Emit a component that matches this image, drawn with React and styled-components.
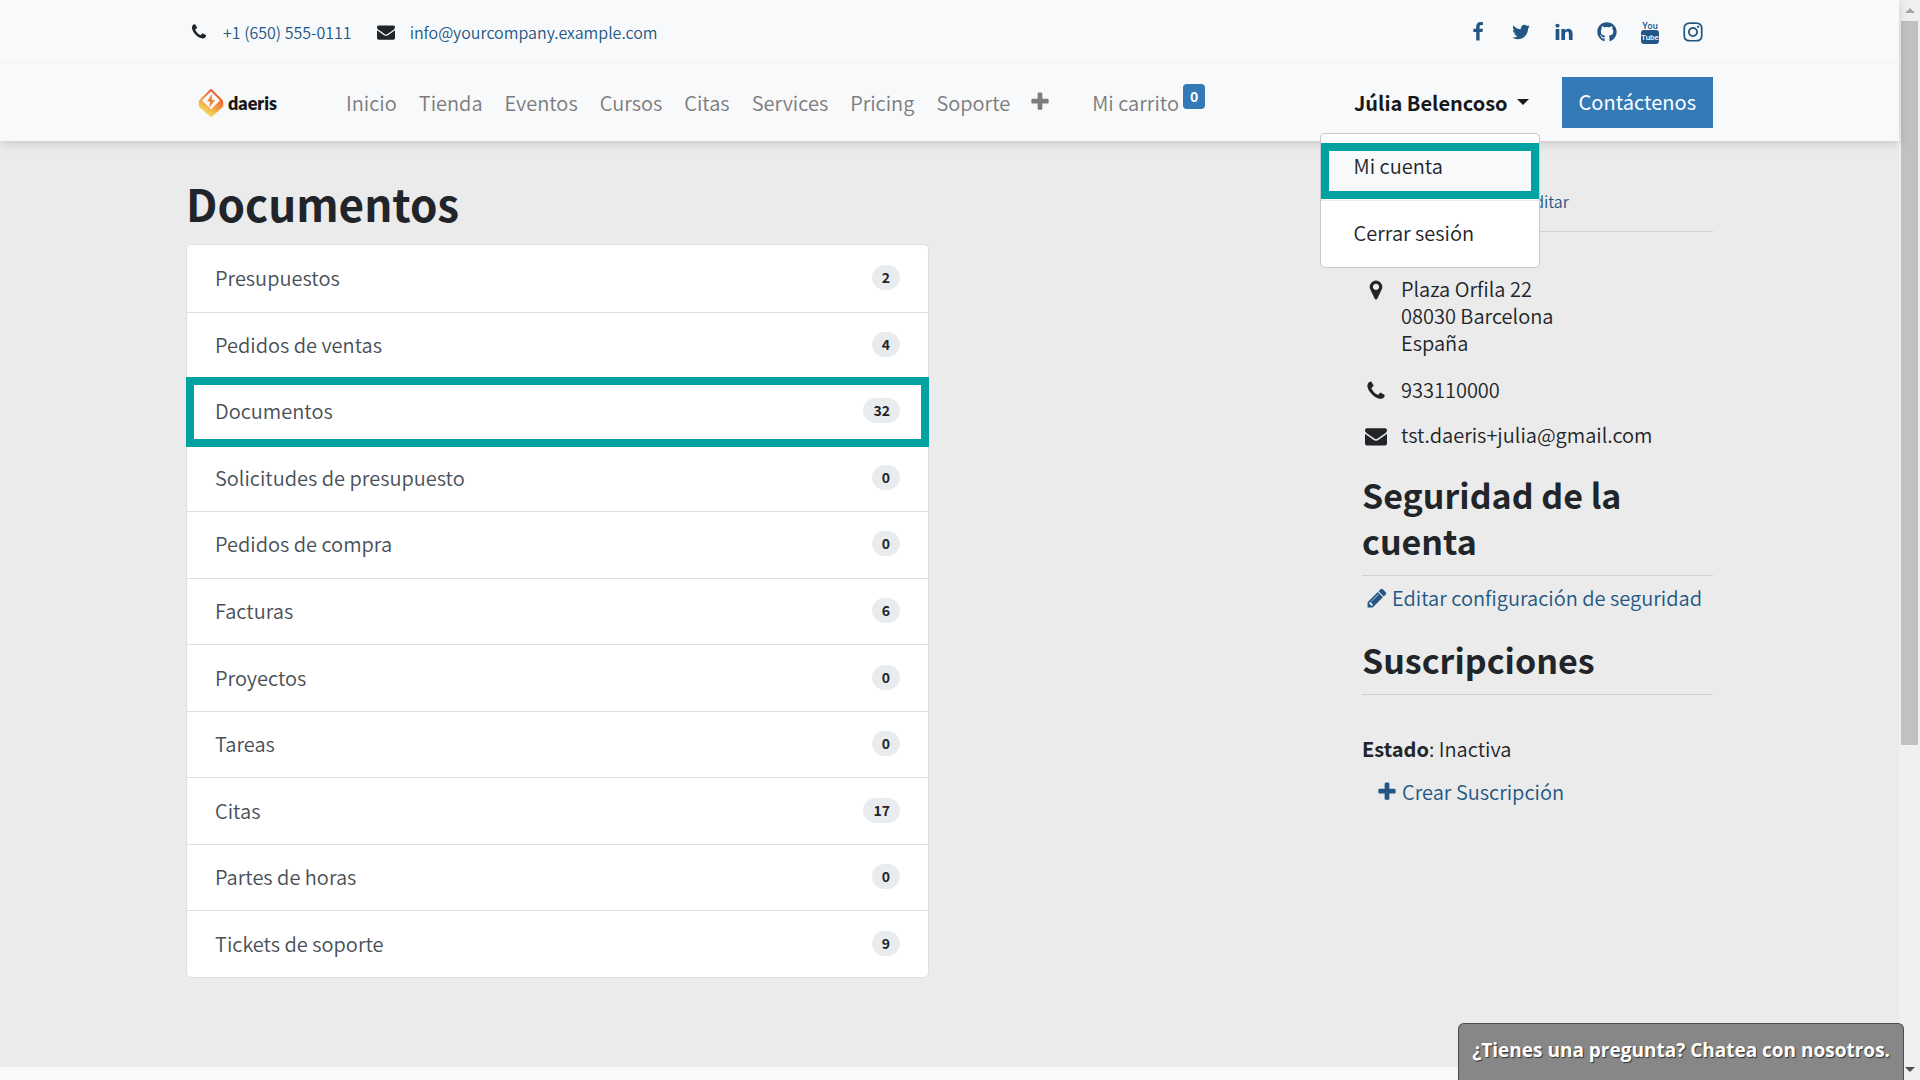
import React from "react";
import styled, { createGlobalStyle } from "styled-components";
import { FaGithub, FaInstagram } from "react-icons/fa";

const GlobalStyle = createGlobalStyle`
  *, *::before, *::after { box-sizing: border-box; }
  html, body, #root { height: 100%; }
  body {
    margin: 0;
    overflow: hidden;
    background: #f8f9fb;
    color: #212529;
    font-family: "Noto Sans CJK SC", "Noto Sans", sans-serif;
    font-size: 20px;
    font-weight: 350;
    line-height: 27px;
  }
  a { text-decoration: none; color: #235684; }
  h1, h2, p, ul, address { margin: 0; padding: 0; font-style: normal; list-style: none; }
`;

const paths = {
  phone:
    "M1600 1240q0 27-10 70.5t-21 68.5q-21 50-122 106-94 51-186 51-27 0-53-3.5t-57.5-12.5-47-14.5-55.5-20.5-49-18q-98-35-175-83-127-79-264-216t-216-264q-48-77-83-175-3-9-18-49t-20.5-55.5-14.5-47-12.5-57.5-3.5-53q0-92 51-186 56-101 106-122 25-11 68.5-21t70.5-10q14 0 21 3 18 6 53 76 11 19 30 54t35 63.5 31 53.5q3 4 17.5 25t21.5 35.5 7 28.5q0 20-28.5 50t-62 55-62 53-28.5 46q0 9 5 22.5t8.5 20.5 14 24 11.5 19q76 137 174 235t235 174q2 1 19 11.5t24 14 20.5 8.5 22.5 5q18 0 46-28.5t53-62 55-62 50-28.5q14 0 28.5 7t35.5 21.5 25 17.5q25 15 53.5 31t63.5 35 54 30q70 35 76 53 3 7 3 21z",
  envelope:
    "M1792 710v794q0 66-47 113t-113 47h-1472q-66 0-113-47t-47-113v-794q44 49 101 87 362 246 497 345 57 42 92.5 65.5t94.5 48 110 24.5h2q51 0 110-24.5t94.5-48 92.5-65.5q170-123 498-345 57-39 100-87zm0-294q0 79-49 151t-122 123q-376 261-468 325-10 7-42.5 31t-54 38.5-52 32.5-57.5 27-50 9h-2q-23 0-50-9t-57.5-27-52-32.5-54-38.5-42.5-31q-91-64-262-182.5t-205-142.5q-62-42-117-115.5t-55-136.5q0-78 41.5-130t118.5-52h1472q65 0 112.5 47t47.5 113z",
  plus:
    "M1600 736v192q0 40-28 68t-68 28h-416v416q0 40-28 68t-68 28h-192q-40 0-68-28t-28-68v-416h-416q-40 0-68-28t-28-68v-192q0-40 28-68t68-28h416v-416q0-40 28-68t68-28h192q40 0 68 28t28 68v416h416q40 0 68 28t28 68z",
  marker:
    "M1152 640q0-106-75-181t-181-75-181 75-75 181 75 181 181 75 181-75 75-181zm256 0q0 109-33 179l-364 774q-16 33-47.5 52t-67.5 19-67.5-19-46.5-52l-365-774q-33-70-33-179 0-212 150-362t362-150 362 150 150 362z",
  pencil:
    "M491 1536l91-91-235-235-91 91v107h128v128h107zm523-928q0-22-22-22-10 0-17 7l-542 542q-7 7-7 17 0 22 22 22 10 0 17-7l542-542q7-7 7-17zm-54-192l416 416-832 832h-416v-416zm683 96q0 53-37 90l-166 166-416-416 166-165q36-38 90-38 53 0 91 38l235 234q37 39 37 91z",
  facebook:
    "M1343 12v264h-157q-86 0-116 36t-30 108v189h293l-39 296h-254v759h-306v-759h-255v-296h255v-218q0-186 104-288.5t277-102.5q147 0 228 12z",
  twitter:
    "M1684 408q-67 98-162 167 1 14 1 42 0 130-38 259.5t-115.5 248.5-184.5 210.5-258 146-323 54.5q-271 0-496-145 35 4 78 4 225 0 401-138-105-2-188-64.5t-114-159.5q33 5 61 5 43 0 85-11-112-23-185.5-111.5t-73.5-205.5v-4q68 38 146 41-66-44-105-115t-39-154q0-88 44-163 121 149 294.5 238.5t371.5 99.5q-8-38-8-74 0-134 94.5-228.5t228.5-94.5q140 0 236 102 109-21 205-78-37 115-142 178 93-10 186-50z",
  linkedin:
    "M477 625v991h-330v-991h330zm21-306q1 73-50.5 122t-135.5 49h-2q-82 0-132-49t-50-122q0-74 51.5-122.5t134.5-48.5 133 48.5 51 122.5zm1166 729v568h-329v-530q0-105-40.5-164.5t-126.5-59.5q-63 0-105.5 34.5t-63.5 85.5q-11 30-11 81v553h-329q2-399 2-647t-1-296l-1-48h329v144h-2q20-32 41-56t56.5-52 87-43.5 114.5-15.5q171 0 275 113.5t104 332.5z",
};

const Glyph = ({ name, size = 18 }) => (
  <svg width={size} height={size} viewBox="0 0 1792 1792" fill="currentColor" aria-hidden="true">
    <path d={paths[name]} />
  </svg>
);

const YouTubeIcon = () => (
  <svg width="20" height="26" viewBox="0 0 20 26" fill="currentColor" aria-hidden="true">
    <text x="10" y="10" textAnchor="middle" fontFamily="Roboto, sans-serif" fontSize="9" fontWeight="500">You</text>
    <rect x="1" y="11" width="18" height="14" rx="3" />
    <text x="10" y="21" textAnchor="middle" fill="#f8f9fb" fontFamily="Roboto, sans-serif" fontSize="8" fontWeight="500">Tube</text>
  </svg>
);

const LogoMark = () => (
  <svg width="26" height="30" viewBox="0 0 26 30" aria-hidden="true">
    <defs>
      <linearGradient id="mark" x1="0.85" y1="0.15" x2="0.35" y2="1">
        <stop offset="0" stopColor="#ea4a2d" />
        <stop offset="0.5" stopColor="#f39a3c" />
        <stop offset="1" stopColor="#f3e467" />
      </linearGradient>
    </defs>
    <path fill="url(#mark)" d="M12 1.400q1-.9 2 0l10.300 10.400q.9.900.9 2v4q0 .9-.9 1.700l-10.300 9q-1 .8-2 0l-10.300-9q-.9-.8-.9-1.700v-4q0-1.100.9-2z" />
    <path fill="#f8f9fb" d="M13 3.200l9 9.300-9 8.700-9-8.700z" />
    <path fill="#f08336" d="M14 6l-5 7.500h3.200l-1 6 6-7.500h-3.400z" />
  </svg>
);

const Screen = styled.div`
  display: flex;
  height: 100%;
  overflow: hidden;
`;
const Page = styled.div`
  flex: 1;
  min-width: 0;
  display: flex;
  flex-direction: column;
`;
const Header = styled.header`
  position: relative;
  z-index: 2;
  background: #f8f9fb;
  box-shadow: 0 2px 10px rgba(0, 0, 0, 0.16);
`;
const Container = styled.div`
  width: 100%;
  max-width: 1527px;
  margin: 0 auto;
  display: flex;
`;
const TopBar = styled.div`
  border-bottom: 1px solid #f3f4f6;
`;
const TopInner = styled(Container)`
  height: 63px;
  padding: 0 10px 0 4px;
  align-items: center;
  justify-content: space-between;
`;
const Contacts = styled.ul`
  display: flex;
  gap: 25px;
  font-size: 16px;
  line-height: 24px;
`;
const Contact = styled.li`
  display: flex;
  align-items: center;
  gap: 15px;
`;
const Social = styled.ul`
  display: flex;
  gap: 23px;
`;
const SocialLink = styled.a`
  display: flex;
  align-items: center;
  justify-content: center;
  width: 20px;
  height: 26px;
`;
const NavBar = styled(Container)`
  height: 77px;
  padding-bottom: 1px;
  align-items: center;
`;
const Brand = styled.a`
  display: flex;
  align-items: center;
  gap: 4px;
  padding: 2px 0 0 12px;
  width: 149px;
  color: #17181c;
  font: 800 18px/26px "Lato", sans-serif;
`;
const Menu = styled.nav`
  display: flex;
  align-items: center;
`;
const NavLink = styled.a`
  display: flex;
  align-items: center;
  padding: 0 11px;
  color: #7b7c7d;
`;
const MoreLink = styled(NavLink)`
  padding: 0 8px;
`;
const CartLink = styled(NavLink)`
  margin-left: 22px;
  gap: 4px;
`;
const CartCount = styled.span`
  margin-bottom: 12px;
  padding: 0 7px;
  border-radius: 4px;
  background: #337ab7;
  color: #fff;
  font-size: 14px;
  font-weight: 700;
  line-height: 25px;
`;
const Account = styled.div`
  position: relative;
  margin-left: auto;
  margin-right: 33px;
`;
const AccountToggle = styled.button`
  display: flex;
  align-items: center;
  gap: 9px;
  padding: 0;
  border: 0;
  background: none;
  color: #17181a;
  font: inherit;
  font-weight: 700;
  &::after {
    content: "";
    border: 6px solid transparent;
    border-top-color: currentColor;
    border-bottom: 0;
  }
`;
const Dropdown = styled.div`
  position: absolute;
  top: 44px;
  right: -11px;
  width: 220px;
  padding: 9px 0 0;
  border: 1px solid #c8c8c8;
  border-radius: 5px;
  background: #fff;
`;
const DropdownItem = styled.a`
  display: flex;
  align-items: center;
  height: ${(p) => (p.$marked ? 56 : 66)}px;
  padding: 0 33px 2px;
  color: #212529;
  ${(p) => p.$marked && "background: #f8f9fb; box-shadow: inset 0 0 0 8px #00a3a1; padding-bottom: 10px;"}
`;
const Divider = styled.hr`
  margin: 1px 0 0;
  border: 0;
  border-top: 1px solid #e9ecef;
`;
const ContactButton = styled.button`
  padding: 11px 17px 13px;
  border: 0;
  background: #337ab7;
  color: #fff;
  font: inherit;
  font-weight: 400;
`;
const Main = styled.main`
  background: #ebebeb;
`;
const Content = styled(Container)`
  justify-content: space-between;
  align-items: flex-start;
  padding: 35px 0 89px;
`;
const Documents = styled.section`
  width: 743px;
`;
const Title = styled.h1`
  font-size: 44px;
  font-weight: 700;
  line-height: 54px;
  margin-bottom: 14px;
`;
const List = styled.ul`
  display: grid;
  grid-auto-rows: 1fr;
  min-height: 734px;
  border: 1px solid #dedfe0;
  border-radius: 5px;
  background: #fff;
`;
const Item = styled.li`
  display: flex;
  & + & { border-top: 1px solid #dedfe0; }
`;
const ItemLink = styled.a`
  flex: 1;
  display: flex;
  align-items: center;
  justify-content: space-between;
  padding: 0 28px 2px;
  color: #495057;
  ${(p) => p.$marked && "position: relative; z-index: 1; margin: -2px -1px; box-shadow: inset 0 0 0 8px #00a3a1; padding: 0 29px 2px;"}
`;
const Count = styled.span`
  padding: 0 10px;
  border-radius: 13px;
  background: #e9ecef;
  color: #212529;
  font-size: 14px;
  font-weight: 700;
  line-height: 25px;
`;
const Sidebar = styled.aside`
  width: 351px;
`;
const DetailsHead = styled.div`
  padding: 13px 0 18px 163px;
  border-bottom: 1px solid #d0d1d1;
  font-size: 16px;
  line-height: 24px;
`;
const Rows = styled.address`
  display: grid;
  gap: 18px;
  padding: 43px 0 24px;
`;
const Row = styled.div`
  display: grid;
  grid-template-columns: 28px 1fr;
  gap: 11px;
  & > svg { justify-self: center; margin-top: 4px; }
  &:first-child { padding-bottom: 2px; }
`;
const SideTitle = styled.h2`
  padding-bottom: 11px;
  border-bottom: 1px solid #d0d1d1;
  font-size: 34px;
  font-weight: 700;
  line-height: 46px;
`;
const ActionLink = styled.a`
  display: flex;
  align-items: center;
  gap: 4px;
  padding-left: ${(p) => p.$indent}px;
`;
const SecurityAction = styled.p`
  padding: 8px 0 26px;
`;
const Status = styled.p`
  padding: 40px 0 16px;
`;
const Strong = styled.strong`
  font-weight: 700;
`;
const ChatButton = styled.button`
  position: fixed;
  right: 16px;
  bottom: 0;
  z-index: 4;
  height: 57px;
  padding: 0 13px 4px;
  border: 1px solid #4c4c4c;
  border-bottom: 0;
  border-radius: 6px 6px 0 0;
  background: #878787;
  color: #fff;
  font: 700 19px/27px "Open Sans", "Noto Sans", sans-serif;
  text-shadow: 1px 1px 1px #333;
`;
const ScrollTrack = styled.div`
  display: flex;
  flex-direction: column;
  align-items: center;
  width: 21px;
  background: #f0f0f0;
`;
const ScrollThumb = styled.div`
  width: 17px;
  height: 67%;
  background: #c1c1c1;
`;
const ScrollArrow = styled.span`
  display: flex;
  align-items: center;
  justify-content: center;
  height: 21px;
  &::after {
    content: "";
    border: 5px solid transparent;
    ${(p) => (p.$down ? "border-top-color: #505050; border-bottom: 0;" : "border-bottom-color: #a3a3a3; border-top: 0;")}
  }
`;
const Spacer = styled.div`
  flex: 1;
`;

const navItems = ["Inicio", "Tienda", "Eventos", "Cursos", "Citas", "Services", "Pricing", "Soporte"];
const documents = [
  ["Presupuestos", 2],
  ["Pedidos de ventas", 4],
  ["Documentos", 32],
  ["Solicitudes de presupuesto", 0],
  ["Pedidos de compra", 0],
  ["Facturas", 6],
  ["Proyectos", 0],
  ["Tareas", 0],
  ["Citas", 17],
  ["Partes de horas", 0],
  ["Tickets de soporte", 9],
];
const networks = [
  ["Facebook", <Glyph name="facebook" size={22} />],
  ["Twitter", <Glyph name="twitter" size={22} />],
  ["LinkedIn", <Glyph name="linkedin" size={22} />],
  ["GitHub", <FaGithub size={20} />],
  ["YouTube", <YouTubeIcon />],
  ["Instagram", <FaInstagram size={22} />],
];

export default function App() {
  return (
    <Screen>
      <GlobalStyle />
      <Page>
        <Header>
          <TopBar>
            <TopInner>
              <Contacts>
                <Contact>
                  <Glyph name="phone" />
                  <a href="#phone">+1 (650) 555-0111</a>
                </Contact>
                <Contact>
                  <Glyph name="envelope" />
                  <a href="#mail">info@yourcompany.example.com</a>
                </Contact>
              </Contacts>
              <Social>
                {networks.map(([name, icon]) => (
                  <li key={name}>
                    <SocialLink href="#social" aria-label={name}>{icon}</SocialLink>
                  </li>
                ))}
              </Social>
            </TopInner>
          </TopBar>
          <NavBar>
            <Brand href="#home">
              <LogoMark />
              daeris
            </Brand>
            <Menu>
              {navItems.map((label) => (
                <NavLink key={label} href="#nav">{label}</NavLink>
              ))}
              <MoreLink href="#more" aria-label="Más">
                <Glyph name="plus" size={22} />
              </MoreLink>
              <CartLink href="#cart">
                Mi carrito
                <CartCount>0</CartCount>
              </CartLink>
            </Menu>
            <Account>
              <AccountToggle type="button" aria-expanded="true">Júlia Belencoso</AccountToggle>
              <Dropdown>
                <DropdownItem href="#account" $marked>Mi cuenta</DropdownItem>
                <Divider />
                <DropdownItem href="#logout">Cerrar sesión</DropdownItem>
              </Dropdown>
            </Account>
            <ContactButton type="button">Contáctenos</ContactButton>
          </NavBar>
        </Header>
        <Main>
          <Content>
            <Documents>
              <Title>Documentos</Title>
              <List>
                {documents.map(([label, count]) => (
                  <Item key={label}>
                    <ItemLink href="#docs" $marked={label === "Documentos"}>
                      {label}
                      <Count>{count}</Count>
                    </ItemLink>
                  </Item>
                ))}
              </List>
            </Documents>
            <Sidebar>
              <DetailsHead>
                <a href="#edit">Editar</a>
              </DetailsHead>
              <Rows>
                <Row>
                  <Glyph name="marker" size={22} />
                  <span>Plaza Orfila 22<br />08030 Barcelona<br />España</span>
                </Row>
                <Row>
                  <Glyph name="phone" size={22} />
                  <span>933110000</span>
                </Row>
                <Row>
                  <Glyph name="envelope" size={22} />
                  <span>tst.daeris+julia@gmail.com</span>
                </Row>
              </Rows>
              <SideTitle>Seguridad de la cuenta</SideTitle>
              <SecurityAction>
                <ActionLink href="#security" $indent={4}>
                  <Glyph name="pencil" size={22} />
                  Editar configuración de seguridad
                </ActionLink>
              </SecurityAction>
              <SideTitle>Suscripciones</SideTitle>
              <Status>
                <Strong>Estado</Strong>: Inactiva
              </Status>
              <ActionLink href="#subscribe" $indent={14}>
                <Glyph name="plus" size={22} />
                Crear Suscripción
              </ActionLink>
            </Sidebar>
          </Content>
        </Main>
      </Page>
      <ScrollTrack aria-hidden="true">
        <ScrollArrow />
        <ScrollThumb />
        <Spacer />
        <ScrollArrow $down />
      </ScrollTrack>
      <ChatButton type="button">¿Tienes una pregunta? Chatea con nosotros.</ChatButton>
    </Screen>
  );
}
